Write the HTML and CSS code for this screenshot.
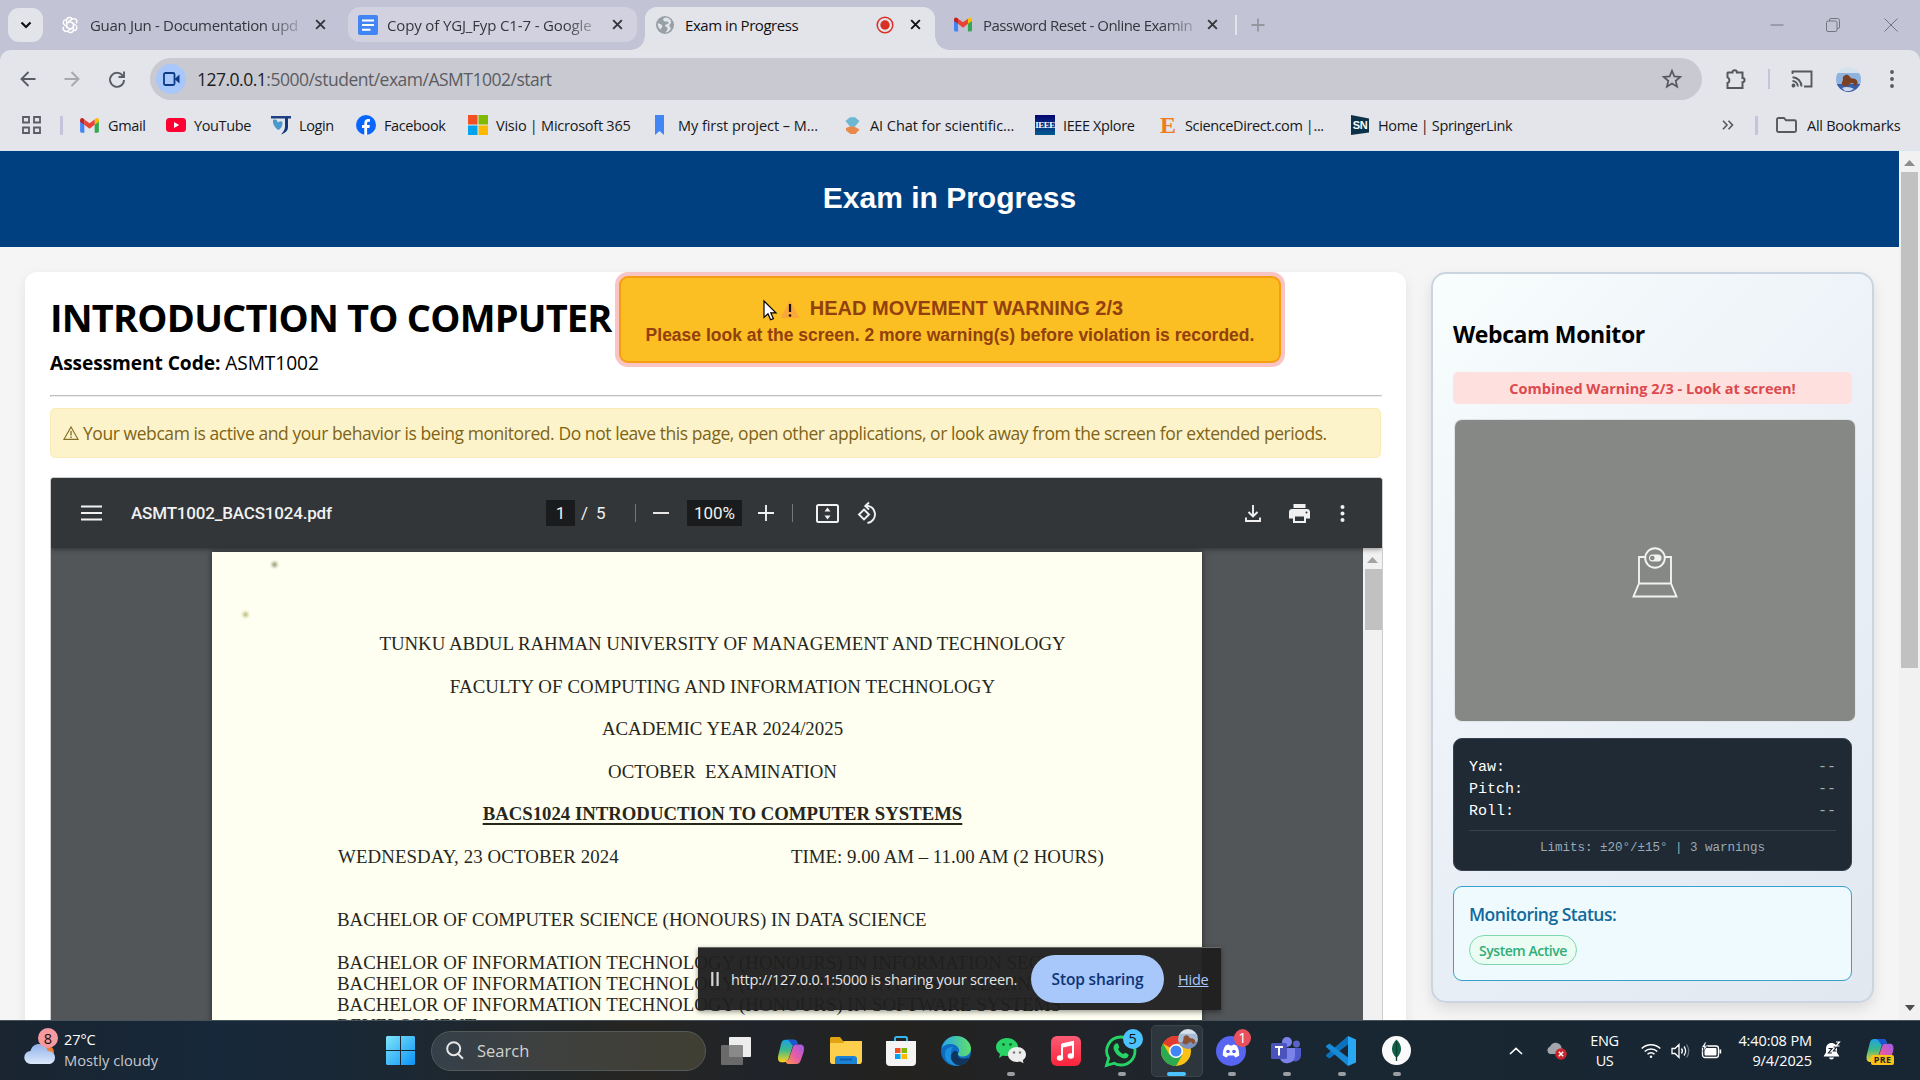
FILE: index.html
```html
<!DOCTYPE html>
<html lang="en">
<head>
<meta charset="utf-8">
<title>Exam in Progress</title>
<link rel="stylesheet" href="styles.css">
</head>
<body>
<svg class="defs" width="0" height="0">
  <defs>
    <linearGradient id="gCop1" x1="0" y1="0" x2="0" y2="1"><stop offset="0" stop-color="#1ea2e6"/><stop offset=".45" stop-color="#3cb98b"/><stop offset="1" stop-color="#ffd11a"/></linearGradient>
    <linearGradient id="gCop2" x1="1" y1="0" x2="0" y2="1"><stop offset="0" stop-color="#9a5cf0"/><stop offset=".5" stop-color="#e45aa8"/><stop offset="1" stop-color="#ff9a4a"/></linearGradient>
    <linearGradient id="gWin" x1="0" y1="0" x2="1" y2="1"><stop offset="0" stop-color="#7fe6fb"/><stop offset="1" stop-color="#0a93f5"/></linearGradient>
    <linearGradient id="gEdge" x1="0" y1="0" x2="1" y2="0"><stop offset="0" stop-color="#2aa6e8"/><stop offset="1" stop-color="#5fe06a"/></linearGradient>
    <linearGradient id="gCloud" x1="0" y1="0" x2="0" y2="1"><stop offset="0" stop-color="#8fb2ea"/><stop offset="1" stop-color="#dce9fb"/></linearGradient>
    <linearGradient id="gMusic" x1="0" y1="0" x2="0" y2="1"><stop offset="0" stop-color="#fb5c74"/><stop offset="1" stop-color="#fa233b"/></linearGradient>
    <symbol id="close" viewBox="0 0 12 12"><path d="M2 2l8 8M10 2l-8 8" stroke="currentColor" stroke-width="1.8" fill="none"/></symbol>
    <symbol id="gmail" viewBox="0 0 20 16"><path d="M0 2.5V14.5a1.2 1.2 0 0 0 1.2 1.2H4.5V6z" fill="#4285f4"/><path d="M20 2.5V14.5a1.2 1.2 0 0 1-1.2 1.2H15.5V6z" fill="#34a853"/><path d="M15.5 1.5V7.3L20 4V2.4C20 .2 17.8-.6 16.2.9z" fill="#fbbc04"/><path d="M4.500 1.500V7.300L0 4V2.400C0 .2 2.200-.6 3.800.9z" fill="#c5221f"/><path d="M4.500 1.500L10 5.600l5.500-4.100V7.300L10 11.500 4.500 7.300z" fill="#ea4335"/></symbol>
    <symbol id="copilot" viewBox="0 0 30 30"><path d="M9 3h9c2.500 0 3.500 1.500 4 4l-4.500 1-5 15c-1 3-2.500 4-5 4H4.500C1 27 .5 23 1.500 19L4.500 7C5.300 4 7 3 9 3z" fill="url(#gCop1)"/><path d="M12 3h6c2.500 0 3.500 1.500 4.200 4.500L18 9.500c-3.500 0-3-6.500-8-6.500z" fill="#1b57d0"/><path d="M21 8h4.500c3.500 0 4 4 3 8l-3 9c-1 3-2.500 4-5 4h-8c-2.500 0-3-1.500-3.500-4l3.500-1 4.500-13c.8-2.200 2-3 4-3z" fill="url(#gCop2)"/></symbol>
  </defs>
</svg>

<div class="screen">
  <header class="tabstrip">
    <div class="tab-search"><svg width="12" height="8" viewBox="0 0 12 8"><path d="M1.500 1.500L6 6l4.500-4.500" stroke="#111" stroke-width="2.200" fill="none"/></svg></div>
    <div class="tab tab-a">
      <svg width="18" height="18" viewBox="0 0 24 24" fill="none" stroke="#fff" stroke-width="1.900"><path d="M12 7.500L16.500 10v5L12 17.600 7.500 15v-5z"/><path d="M7.500 12V6a4 4 0 0 1 7.500-2M10 7.200l5-3a4 4 0 0 1 5.500 5.500M14.500 9l4.800 3a4 4 0 0 1-1.800 7.400M16.500 12v6a4 4 0 0 1-7.500 2M14 17l-5 3a4 4 0 0 1-5.500-5.500M9.500 15l-4.800-3A4 4 0 0 1 6.500 4.800"/></svg>
      <span class="title fade">Guan Jun - Documentation upd</span>
      <svg class="x" width="13" height="13"><use href="#close"/></svg>
    </div>
    <div class="tab tab-b">
      <svg width="20" height="20" viewBox="0 0 20 20"><rect width="20" height="20" rx="2" fill="#4285f4"/><path d="M4 5.500h12M4 10h12M4 14.700h8.500" stroke="#fff" stroke-width="2"/></svg>
      <span class="title fade">Copy of YGJ_Fyp C1-7 - Google</span>
      <svg class="x" width="13" height="13"><use href="#close"/></svg>
    </div>
    <div class="tab tab-c">
      <svg width="18" height="18" viewBox="0 0 18 18"><circle cx="9" cy="9" r="9" fill="#97a0a5"/><path d="M10 1.500c-3 .5-3.500 2-2 3.500s4-.5 4.500 1.500-3.500 1.500-3.500 3 3 1 2.500 3.500-1.500 2.500-2.500 3.500c2.500 0 5-1.500 6-4.500-1-1.500-2-1-1.500-3s2-1.500 1.500-3.500C14.500 3.500 13 2 10 1.500zM1.800 7c2 1 4.500 1.500 4.500 3S5 12 4.500 13.500C2.500 12 1.500 9.500 1.800 7z" fill="#e3e4ea"/></svg>
      <span class="title">Exam in Progress</span>
      <svg width="18" height="18" viewBox="0 0 18 18"><circle cx="9" cy="9" r="7.800" fill="none" stroke="#d93025" stroke-width="1.500"/><circle cx="9" cy="9" r="4.700" fill="#d93025"/></svg>
      <svg class="x dark" width="13" height="13"><use href="#close"/></svg>
    </div>
    <div class="tab tab-d">
      <svg width="18" height="15"><use href="#gmail"/></svg>
      <span class="title fade">Password Reset - Online Examin</span>
      <svg class="x" width="13" height="13"><use href="#close"/></svg>
    </div>
    <i class="tab-sep"></i>
    <svg width="14" height="14" viewBox="0 0 14 14"><path d="M7 .5v13M.5 7h13" stroke="#96969f" stroke-width="1.800"/></svg>
    <div class="win">
      <svg width="14" height="14" viewBox="0 0 14 14" fill="none" stroke="#74747e"><path d="M.5 7h13"/></svg>
      <svg width="14" height="14" viewBox="0 0 14 14" fill="none" stroke="#74747e"><rect x=".5" y="3" width="10.500" height="10.500" rx="1.500"/><path d="M3.500 3V2A1.500 1.500 0 0 1 5 .5h6.500a2 2 0 0 1 2 2V9A1.500 1.500 0 0 1 12 10.500h-1"/></svg>
      <svg width="14" height="14" viewBox="0 0 14 14" fill="none" stroke="#74747e"><path d="M.5.5l13 13M13.500.5l-13 13"/></svg>
    </div>
  </header>

  <div class="chrome">
    <nav class="toolbar">
      <svg width="16" height="16" viewBox="0 0 16 16" fill="none" stroke="#5a5d63" stroke-width="1.900"><path d="M15.500 8H1.500M8.500 1L1.500 8l7 7"/></svg>
      <svg width="16" height="16" viewBox="0 0 16 16" fill="none" stroke="#a6a8ae" stroke-width="1.900"><path d="M.5 8h14M7.500 1l7 7-7 7"/></svg>
      <svg width="16" height="16" viewBox="0 0 16 16" fill="none" stroke="#5a5d63" stroke-width="1.900"><path d="M14 5.200A7 7 0 1 0 15 9M15 .5V6H9.500"/></svg>
      <div class="omnibox">
        <span class="chip"><svg width="17" height="14" viewBox="0 0 17 14"><rect x="1" y="1" width="10.500" height="12" rx="1.500" fill="none" stroke="#0b3a86" stroke-width="1.800"/><path d="M11.500 7L16.500 2.500v9z" fill="#0b3a86"/></svg></span>
        <span class="url"><b>127.0.0.1</b>:5000/student/exam/ASMT1002/start</span>
        <svg width="20" height="20" viewBox="0 0 20 20"><path d="M10 1.800l2.300 5.600 6 .5-4.600 3.900 1.400 5.900L10 14.500l-5.100 3.200 1.400-5.900L1.700 7.900l6-.5z" fill="none" stroke="#55585d" stroke-width="1.700"/></svg>
      </div>
      <svg width="22" height="22" viewBox="0 0 22 22"><path d="M3 4.500h4.500a2.200 2.200 0 0 1 4.400 0H17.500V10a2 2 0 0 1 0 4.200V20H2.500v-5a3 3 0 0 0 0-5.600V5z" fill="none" stroke="#55585d" stroke-width="2"/></svg>
      <i class="t-sep"></i>
      <svg width="22" height="18" viewBox="0 0 22 18" fill="none" stroke="#55585d" stroke-width="1.900"><path d="M1.500 4V1.500h19v15H13M1.500 7.200a9.300 9.300 0 0 1 9 9.300M1.500 11a5.500 5.500 0 0 1 5.400 5.500"/><circle cx="2.500" cy="15.500" r="1" fill="#55585d"/></svg>
      <svg width="25" height="25" viewBox="0 0 25 25"><clipPath id="av"><circle cx="12.500" cy="12.500" r="12.500"/></clipPath><g clip-path="url(#av)"><path fill="#d5e2ee" d="M0 0h25v9H0z"/><path fill="#8fb2de" d="M0 6h25v11H0z"/><path fill="#3a5da8" d="M0 17h25v8H0z"/><path d="M6 18c-1-2 1-4 1-6-1-2 2-5 5-4 2 1 2 3 4 3.500 4 0 6 2 5.500 5.500l-3 2-1.500-3-3 .5-3 3-2-.5z" fill="#7b3f22"/><path d="M6 21c4-2 9-1 12 1l-4 2H9z" fill="#c9d8ee"/></g></svg>
      <svg width="4" height="18" viewBox="0 0 4 18" fill="#55585d"><circle cx="2" cy="2" r="1.900"/><circle cx="2" cy="9" r="1.900"/><circle cx="2" cy="16" r="1.900"/></svg>
    </nav>

    <nav class="bookmarks">
      <svg width="19" height="18" viewBox="0 0 19 18" fill="none" stroke="#5a5d63" stroke-width="1.800"><path d="M1 1h6v5.500H1zM12 1h6v5.500h-6zM1 11.500h6V17H1zM12 11.500h6V17h-6z"/></svg>
      <i class="sep"></i>
      <svg width="19" height="15"><use href="#gmail"/></svg><span>Gmail</span>
      <svg width="20" height="14" viewBox="0 0 20 14"><rect width="20" height="14" rx="3.500" fill="#f03"/><path d="M8 4l5.200 3L8 10z" fill="#fff"/></svg><span>YouTube</span>
      <svg width="20" height="20" viewBox="0 0 20 20"><path d="M0 1h20v2.500H0z" fill="#1d3f86"/><path d="M14 3h3v9c0 4-3 6-7 7.500 2.500-3 4-5 4-8z" fill="#123a7c"/><path d="M2 5c3-1.500 5 1 4.500 2.500C9 6 12 5 11.500 9c-.5 3-2 5-4 6C4 13 1.500 9 2 5z" fill="#4a98cc"/></svg><span>Login</span>
      <svg width="20" height="20" viewBox="0 0 20 20"><circle cx="10" cy="10" r="10" fill="#0866ff"/><path d="M8.300 20v-7H6v-3h2.300V8.300C8.300 5.500 9.800 4 12.300 4c.8 0 1.400.1 1.700.2v2.600h-1.300c-1.200 0-1.600.5-1.600 1.600V10h2.800l-.5 3h-2.300v7z" fill="#fff"/></svg><span>Facebook</span>
      <svg width="20" height="20" viewBox="0 0 20 20"><path fill="#f25022" d="M0 0h9.500v9.500H0z"/><path fill="#7fba00" d="M10.500 0H20v9.500h-9.500z"/><path fill="#00a4ef" d="M0 10.500h9.500V20H0z"/><path fill="#ffb900" d="M10.500 10.500H20V20h-9.500z"/></svg><span class="ls-a">Visio | Microsoft 365</span>
      <svg width="9" height="20" viewBox="0 0 9 20"><path d="M0 0h9v20l-4.500-4L0 20z" fill="#4285f4"/></svg><span class="ls-b">My first project – M...</span>
      <svg width="15" height="17" viewBox="0 0 15 17"><path d="M7.500 8.500l7 4-4 4.500h-5L1 13.500V11z" fill="#e8894a"/><path d="M5 .3h5L14.500 4 10 9.500H5L.5 4z" fill="#6fb7d0"/></svg><span class="ls-b">AI Chat for scientific...</span>
      <em class="ieee">IEEE</em><span>IEEE Xplore</span>
      <em class="elsevier">E</em><span>ScienceDirect.com |...</span>
      <em class="sn">SN</em><span>Home | SpringerLink</span>
      <svg width="12" height="10" viewBox="0 0 12 10" fill="none" stroke="#55585d" stroke-width="1.600"><path d="M1 .8L5 5 1 9.200M6.500.8l4 4.200-4 4.200"/></svg>
      <i class="sep"></i>
      <svg width="21" height="16" viewBox="0 0 21 16"><path d="M1 13.500v-11C1 1.700 1.700 1 2.500 1H8l2 2.300h8.500c.8 0 1.500.7 1.500 1.500v8.700c0 .8-.7 1.500-1.500 1.500h-16C1.700 15 1 14.300 1 13.500z" fill="none" stroke="#55585d" stroke-width="1.900"/></svg><span class="ls-a">All Bookmarks</span>
    </nav>
  </div>

  <div class="viewport">
    <main class="page">
      <div class="hero"><h1>Exam in Progress</h1></div>
      <div class="columns">
        <section class="card">
          <h2>INTRODUCTION TO COMPUTER</h2>
          <p class="code"><b>Assessment Code:</b> <span>ASMT1002</span></p>
          <hr>
          <div class="notice"><svg width="16" height="14" viewBox="0 0 16 14"><path d="M8 1L15 13.300H1z" fill="none" stroke="#857028" stroke-width="1.200"/><path d="M8 5v4.500M8 10.500v1.500" stroke="#857028" stroke-width="1.400"/></svg><span>Your webcam is active and your behavior is being monitored. Do not leave this page, open other applications, or look away from the screen for extended periods.</span></div>
          <div class="pdf">
            <div class="pdfbar">
              <svg width="21" height="16" viewBox="0 0 21 16"><path d="M0 1.500h21M0 8h21M0 14.500h21" stroke="#f1f1f1" stroke-width="2.200"/></svg>
              <span class="fname">ASMT1002_BACS1024.pdf</span>
              <span class="box">1</span>
              <span class="slash">/</span><span>5</span>
              <i></i>
              <svg width="16" height="16" viewBox="0 0 16 16"><path d="M0 8h16" stroke="#f1f1f1" stroke-width="1.900"/></svg>
              <span class="box">100%</span>
              <svg width="16" height="16" viewBox="0 0 16 16"><path d="M0 8h16M8 0v16" stroke="#f1f1f1" stroke-width="1.900"/></svg>
              <i></i>
              <svg width="23" height="19" viewBox="0 0 23 19"><rect x="1" y="1" width="21" height="17" rx="1.500" fill="none" stroke="#f1f1f1" stroke-width="2"/><path d="M11.500 3.500l3 4h-6zM11.500 15.500l3-4h-6z" fill="#f1f1f1"/></svg>
              <svg width="23" height="23" viewBox="0 0 23 23" fill="none" stroke="#f1f1f1" stroke-width="1.900"><path d="M8 7.500L13 12.500l-5 5-5-5z"/><path d="M9 3.700a8.700 8.700 0 1 1 2.500 17.300M13 .5L9.300 4 13 7.500"/></svg>
              <svg width="16" height="17" viewBox="0 0 16 17" fill="none" stroke="#f1f1f1" stroke-width="1.900"><path d="M8 0v11M3.500 7L8 11.500 12.500 7M1 12.500V16h14v-3.500"/></svg>
              <svg width="21" height="19" viewBox="0 0 21 19"><path d="M4.500 0h12v4h-12zM3 5h15c1.700 0 3 1.300 3 3v6.500h-4V19H4v-4.500H0V8c0-1.700 1.300-3 3-3zm3 7.500V17h9v-4.500z" fill="#f1f1f1" fill-rule="evenodd"/><circle cx="17.500" cy="8.500" r="1" fill="#323639"/></svg>
              <svg width="5" height="17" viewBox="0 0 5 17" fill="#f1f1f1"><circle cx="2.500" cy="2" r="2"/><circle cx="2.500" cy="8.500" r="2"/><circle cx="2.500" cy="15" r="2"/></svg>
            </div>
            <div class="pdfbody">
              <article class="sheet">
                <p>TUNKU ABDUL RAHMAN UNIVERSITY OF MANAGEMENT AND TECHNOLOGY</p>
                <p class="l2">FACULTY OF COMPUTING AND INFORMATION TECHNOLOGY</p>
                <p>ACADEMIC YEAR 2024/2025</p>
                <p>OCTOBER&nbsp; EXAMINATION</p>
                <p class="l5">BACS1024 INTRODUCTION TO COMPUTER SYSTEMS</p>
                <div class="when"><span>WEDNESDAY, 23 OCTOBER 2024</span><span>TIME: 9.00 AM – 11.00 AM (2 HOURS)</span></div>
                <p class="l7">BACHELOR OF COMPUTER SCIENCE (HONOURS) IN DATA SCIENCE</p>
                <div class="progs">BACHELOR OF INFORMATION TECHNOLOGY (HONOURS) IN INFORMATION SECURITY<br>BACHELOR OF INFORMATION TECHNOLOGY (HONOURS) IN INTERNET TECHNOLOGY<br>BACHELOR OF INFORMATION TECHNOLOGY (HONOURS) IN SOFTWARE SYSTEMS<br>DEVELOPMENT</div>
                <i class="speck s1"></i><i class="speck s2"></i>
              </article>
              <div class="pdfscroll"><svg width="11" height="6" viewBox="0 0 11 6"><path d="M0 6L5.500 0 11 6z" fill="#a3a3a3"/></svg><i></i></div>
            </div>
          </div>
        </section>

        <aside class="cam">
          <h3>Webcam Monitor</h3>
          <div class="alert">Combined Warning 2/3 - Look at screen!</div>
          <div class="video"><svg width="46" height="56" viewBox="0 0 46 56" fill="none" stroke="#f2f2f2" stroke-width="1.900"><circle cx="23" cy="15" r="9.800"/><rect x="17" y="11.500" width="12.500" height="7" rx="3.500" fill="#f2f2f2" stroke="none"/><circle cx="20.300" cy="15" r="2.300" fill="#868886" stroke="none"/><path d="M13.500 14H7v26.500h32V14h-6.500M7 40.500L1.500 53.500h43L39 40.500"/></svg></div>
          <div class="pose">
            <div><span>Yaw:</span><em>--</em></div>
            <div><span>Pitch:</span><em>--</em></div>
            <div><span>Roll:</span><em>--</em></div>
            <p>Limits: ±20°/±15° | 3 warnings</p>
          </div>
          <div class="status"><h4>Monitoring Status:</h4><span class="pill">System Active</span></div>
        </aside>
      </div>
    </main>
    <div class="scroll">
      <svg width="11" height="6" viewBox="0 0 11 6"><path d="M0 6L5.500 0 11 6z" fill="#8d8d8d"/></svg>
      <i></i>
      <svg width="10" height="6" viewBox="0 0 10 6"><path d="M0 0h10L5 6z" fill="#4d4d4d"/></svg>
    </div>

    <div class="banner">
      <div class="b1"><svg width="20" height="20" viewBox="0 0 20 20"><path d="M10 1L19.500 19H.5z" fill="#fba83a"/><path d="M10 5v8" stroke="#1c1005" stroke-width="2.200"/><circle cx="10" cy="16.500" r="1.300" fill="#1c1005"/></svg><span>HEAD MOVEMENT WARNING 2/3</span></div>
      <div class="b2">Please look at the screen. 2 more warning(s) before violation is recorded.</div>
    </div>
    <svg class="cursor" width="14" height="22" viewBox="0 0 14 22"><path d="M1 1v16.500l4-3.700 2.600 6 2.800-1.200-2.600-5.800h5.200z" fill="#fff" stroke="#000" stroke-width="1.200"/></svg>

    <div class="share">
      <svg width="8" height="14" viewBox="0 0 8 14"><path d="M1.300 0v14M6.600 0v14" stroke="#d5d5d5" stroke-width="2.200"/></svg>
      <span class="share-text">http://127.0.0.1:5000 is sharing your screen.</span>
      <span class="share-btn">Stop sharing</span>
      <span class="share-hide">Hide</span>
    </div>
  </div>

  <footer class="taskbar">
    <div class="weather">
      <svg width="36" height="40" viewBox="0 0 36 40"><circle cx="24" cy="24" r="6" fill="#ee7d33"/><path d="M7 36a6.500 6.500 0 0 1-.5-13C8 18 11 16 15 16c5 0 8 3 8.500 7C28 23 31 25.500 31 29.500S28 36 25 36z" fill="url(#gCloud)"/><circle cx="24" cy="10" r="10" fill="#f79a9f"/></svg>
      <b class="wbadge">8</b>
      <p><span>27°C</span><em>Mostly cloudy</em></p>
    </div>
    <svg width="29" height="29" viewBox="0 0 29 29" fill="url(#gWin)"><path d="M1 0h13v14H0V1zM15 0h13l1 1v13H15zM0 15h14v14H1l-1-1zM15 15h14v13l-1 1H15z"/></svg>
    <div class="search"><svg width="18" height="19" viewBox="0 0 18 19" fill="none" stroke="#e6e6e6" stroke-width="2"><circle cx="7.700" cy="7.700" r="6.500"/><path d="M12 12.800l5 5"/></svg><span>Search</span></div>
    <div class="apps">
      <div><svg width="30" height="28" viewBox="0 0 30 28"><rect x="8" y="0" width="22" height="20" rx="1" fill="#ededed"/><rect x="0" y="8" width="22" height="20" rx="1" fill="#777" fill-opacity=".85"/></svg></div>
      <div><svg width="30" height="28" viewBox="0 0 30 30"><use href="#copilot"/></svg></div>
      <div><svg width="32" height="28" viewBox="0 0 32 28"><path d="M1.500 0H10l3 4h17c1.200 0 2 .8 2 2v18H0V1.500C0 .7.700 0 1.500 0z" fill="#e2a312"/><path d="M0 6h13l2-2h17v20c0 1.500-1 3-2 3H2c-1 0-2-1-2-3z" fill="#fdcf4c"/><path d="M5 27v-5a3 3 0 0 1 3-3h16a3 3 0 0 1 3 3v5z" fill="#1b83d6"/><path d="M10 22.500h12" stroke="#0e5ba8" stroke-width="1.800"/></svg></div>
      <div><svg width="30" height="30" viewBox="0 0 30 30"><path d="M9 8V2.500C9 1.500 9.500 1 10.500 1h9c1 0 1.500.5 1.500 1.500V8" fill="none" stroke="#35b4ef" stroke-width="2"/><path d="M0 5h30v21a4 4 0 0 1-4 4H4a4 4 0 0 1-4-4z" fill="#f4f4f4"/><path fill="#f25022" d="M9 12h5.500v5H9z"/><path fill="#7fba00" d="M15.500 12H21v5h-5.500z"/><path fill="#00a4ef" d="M9 18h5.500v5H9z"/><path fill="#ffb900" d="M15.500 18H21v5h-5.500z"/></svg></div>
      <div><svg width="30" height="30" viewBox="0 0 30 30"><circle cx="15" cy="15" r="15" fill="#0f6cc4"/><path d="M.5 12.500C2 5 8 0 15 0c9 0 15 6.500 15 12.500 0 5-4 8-8 8-4.500 0-6-2-4.500-3.500C20 14 16 8 10 8 5.500 8 2 10 .5 12.500z" fill="url(#gEdge)"/><path d="M17 18c-1 3 3 6.500 11 3.500C25.500 27 20 30 15 30 9 28 8.500 20 12 16c2-2.500 5-1 5 2z" fill="#10345e"/><path d="M10 17c-1.500 6 2 12 9 12.500C10 31 3 25 4 17c.5-4 4-6.500 8-6-1.500 1.500-2 4-2 6z" fill="#1b90dc"/></svg></div>
      <div class="run"><svg width="30" height="26" viewBox="0 0 30 26"><path d="M11 0c6 0 11 4 11 9s-5 9-11 9c-1.500 0-2.500-.2-4-.6L3 20l1-4C1.500 14 0 12 0 9c0-5 5-9 11-9z" fill="#2ad366"/><circle cx="7.500" cy="6.500" r="1.400" fill="#136b32"/><circle cx="14.500" cy="6.500" r="1.400" fill="#136b32"/><path d="M21 9c5 0 9 3.300 9 7.500 0 2.300-1.200 4.300-3.200 5.700l.7 3-3.200-1.700c-1 .3-2 .5-3.300.5-5 0-9-3.300-9-7.500S16 9 21 9z" fill="#ededed"/><circle cx="18" cy="14.500" r="1.200" fill="#777"/><circle cx="24" cy="14.500" r="1.200" fill="#777"/></svg></div>
      <div><svg width="30" height="30" viewBox="0 0 30 30"><rect width="30" height="30" rx="6" fill="url(#gMusic)"/><path d="M11 8.500L22 6v13.500M11 8.500V22" fill="none" stroke="#fff" stroke-width="2"/><path d="M10 8l13-3v4L10 12z" fill="#fff"/><ellipse cx="9" cy="22" rx="3.200" ry="2.700" fill="#fff"/><ellipse cx="19.800" cy="20" rx="3.200" ry="2.700" fill="#fff"/></svg></div>
      <div class="run"><svg width="32" height="32" viewBox="0 0 32 32"><path d="M16 2a14 14 0 0 1 0 28c-2.500 0-4.800-.6-6.800-1.800L1.500 30.500l2.200-7.300A14 14 0 0 1 16 2z" fill="#1f2829" stroke="#25d366" stroke-width="2.800"/><path d="M11 8.500c1-.6 1.800-.3 2.200.8l1 2.600c.2.700-1.200 1.700-1 2.300 1 2.200 2.500 3.700 4.800 4.700.8.300 1.500-1.500 2.300-1.200l2.500 1.200c1 .5 1 1.200.5 2.300-1 2-3.500 2.800-6 1.800-4-1.500-7-4.500-8.500-8.500-.8-2.500.2-5 2.200-6z" fill="#25d366"/></svg><b class="n blue">5</b></div>
      <div class="run on"><svg width="30" height="30" viewBox="0 0 30 30"><circle cx="15" cy="15" r="15" fill="#fbc116"/><path d="M15 15L2 7.500A15 15 0 0 1 28 7.500H15z" fill="#e33b2e"/><path d="M15 15l-6.500 3.700L2 7.500A15 15 0 0 0 15 30l6.500-11.300z" fill="#2da94f"/><path d="M2 7.500A15 15 0 0 1 28 7.500H15z" fill="#e33b2e"/><circle cx="15" cy="15" r="7" fill="#fff"/><circle cx="15" cy="15" r="5.500" fill="#4285f4"/></svg><svg class="n" width="20" height="20" viewBox="0 0 25 25"><g clip-path="url(#av)"><path fill="#d5e2ee" d="M0 0h25v9H0z"/><path fill="#a9bcd6" d="M0 6h25v11H0z"/><path fill="#7d93bf" d="M0 17h25v8H0z"/><path d="M6 18c-1-2 1-4 1-6-1-2 2-5 5-4 2 1 2 3 4 3.500 4 0 6 2 5.500 5.500l-3 2-1.500-3-3 .5-3 3-2-.5z" fill="#8b5236"/></g></svg></div>
      <div class="run"><svg width="30" height="30" viewBox="0 0 30 30"><circle cx="15" cy="15" r="15" fill="#5865f2"/><path d="M9.500 9.500c1.300-.7 2.500-1 3.500-1.100l.7 1.200h2.600l.7-1.200c1 .1 2.200.4 3.500 1.100 2 3 3 6.500 2.700 10-1.300 1-2.700 1.600-4 2l-1.200-1.900h-6L10.800 21.500c-1.300-.4-2.700-1-4-2-.3-3.500.7-7 2.700-10z" fill="#fff"/><circle cx="12" cy="15.500" r="1.800" fill="#5865f2"/><circle cx="18" cy="15.500" r="1.800" fill="#5865f2"/></svg><b class="n red">1</b></div>
      <div class="run"><svg width="30" height="28" viewBox="0 0 30 28"><circle cx="25.500" cy="7" r="3.400" fill="#5b62c8"/><circle cx="16" cy="5" r="5" fill="#7b83eb"/><path d="M20 11h10v8a6 6 0 0 1-8 5z" fill="#5059c9"/><path d="M9 11h15v8a8 8 0 0 1-15 3z" fill="#7b83eb"/><rect y="6" width="16" height="16" rx="1.500" fill="#4b53bc"/><path d="M4 10h8M8 10v8.500" stroke="#fff" stroke-width="2"/></svg></div>
      <div class="run"><svg width="30" height="30" viewBox="0 0 30 30"><path d="M22 0l8 3.500v23L22 30z" fill="#2aa7f2"/><path d="M22 0v8.500L3.500 22.500.3 20.500 0 19z" fill="#0d72bd"/><path d="M22 30v-8.500L3.500 7.500.3 9.500 0 11z" fill="#1789d6"/></svg></div>
      <div class="run"><svg width="29" height="29" viewBox="0 0 29 29"><circle cx="14.500" cy="14.500" r="14.500" fill="#fafafa"/><path d="M14.500 3.500c5 5 7 12 0 18.500-7-6.500-5-13.500 0-18.500z" fill="#116149"/><path d="M14.500 5v20" stroke="#0b3f2f" stroke-width="1.300"/></svg></div>
    </div>
    <div class="tray">
      <svg width="14" height="8" viewBox="0 0 14 8"><path d="M1 7l6-5.700L13 7" fill="none" stroke="#fff" stroke-width="1.600"/></svg>
      <svg width="21" height="18" viewBox="0 0 21 18"><path d="M4 12a4 4 0 0 1 0-7.500C6 1 9 .5 11 1c3 .5 4.500 3 4.500 5 2 1 3 4-1 6z" fill="#a3a7ab"/><circle cx="15" cy="12" r="5.800" fill="#c9252d"/><path d="M12.800 9.800l4.400 4.400M17.200 9.800l-4.400 4.400" stroke="#fff" stroke-width="1.400"/></svg>
      <p class="lang">ENG<br>US</p>
      <svg width="20" height="16" viewBox="0 0 20 16" fill="none" stroke="#fff" stroke-width="1.500"><path d="M.7 5.500a13.200 13.200 0 0 1 18.600 0M3.700 8.500a9 9 0 0 1 12.600 0M6.500 11.300a5 5 0 0 1 7 0"/><circle cx="10" cy="13.800" r="1.200" fill="#fff" stroke="none"/></svg>
      <svg width="20" height="16" viewBox="0 0 20 16" fill="none" stroke="#fff" stroke-width="1.300"><path d="M1 5.500h3L8 1.500v13l-4-4H1zM10.500 5.500q1.800 2.500 0 5M13 3.500q3.300 4.500 0 9"/><path d="M15.500 1.500q4.500 6.500 0 13" stroke="#6b7680"/></svg>
      <svg width="21" height="17" viewBox="0 0 21 17"><rect x="1.500" y="4" width="16" height="11.500" rx="2.500" fill="none" stroke="#fff" stroke-width="1.300"/><rect x="3.500" y="6" width="12" height="7.500" rx="1" fill="#fff"/><path d="M18.500 7.500h1.700v4h-1.700z" fill="#fff"/><path d="M4 0L.5 5.500H3L2 9.500 6.500 4H4l1.500-4z" fill="#fff" stroke="#182634" stroke-width=".7"/></svg>
      <p class="clock">4:40:08 PM<br>9/4/2025</p>
      <svg width="18" height="19" viewBox="0 0 18 19"><path d="M8.500 2C5 2 3 4.500 3 8v3.500L.8 15v.5h15.400V15L14 11.500V8c0-3.500-2-6-5.500-6zM6 16.500h5c-.5 2.500-4.500 2.500-5 0z" fill="#fff"/><path d="M5.500 7.500h3.500l-3.500 4.500h3.500M10.500 6h3l-3 4h3" fill="none" stroke="#182634" stroke-width="1.200"/><path d="M13 1h3.500l-3.500 4h3.500" fill="none" stroke="#fff" stroke-width="1.200"/></svg>
      <span class="pre"><svg width="30" height="29" viewBox="0 0 30 30"><use href="#copilot"/></svg><b>PRE</b></span>
    </div>
  </footer>
</div>
</body>
</html>
```
FILE: styles.css
```css
* { box-sizing: border-box; }
body { margin: 0; font-family: "Open Sans", "Noto Sans", sans-serif; }
p, h1, h2, h3, h4 { margin: 0; }
em, i { font-style: normal; }
svg { display: block; flex: none; overflow: visible; }
.defs { position: absolute; }

.screen { width: 1920px; height: 1080px; overflow: hidden; display: flex; flex-direction: column; white-space: nowrap; background: #c3c3d6; }

/* Tab strip */
.tabstrip { height: 50px; flex: none; display: flex; align-items: center; padding-left: 8px; position: relative; font-size: 15px; color: #35363c; letter-spacing: -0.45px; }
.tab-search { width: 35px; height: 34px; border-radius: 11px; background: #e3e4ea; display: flex; align-items: center; justify-content: center; }
.tab { height: 35px; border-radius: 12px; display: grid; align-items: center; align-self: flex-start; margin-top: 7px; }
.tab-a { margin-left: 18px; width: 287px; grid-template-columns: 29px 208px 1fr; letter-spacing: -0.32px; }
.tab-a .x { margin-left: 16px; }
.tab-b { width: 289px; background: #d1d1df; padding-left: 10px; grid-template-columns: 29px 209px 1fr; letter-spacing: -0.14px; }
.tab-b .x { margin-left: 15px; }
.tab-c { width: 290px; height: 43px; margin-left: 8px; padding: 0 0 8px 11px; background: #e3e4ea; border-radius: 12px 12px 0 0; grid-template-columns: 29px 191px 33px 1fr; color: #111; position: relative; }
.tab-c::before, .tab-c::after { content: ""; position: absolute; bottom: 0; width: 14px; height: 14px; }
.tab-c::before { left: -14px; background: radial-gradient(circle at 0 0, transparent 13.500px, #e3e4ea 14px); }
.tab-c::after { right: -14px; background: radial-gradient(circle at 100% 0, transparent 13.500px, #e3e4ea 14px); }
.tab-d { margin-left: 19px; width: 281px; grid-template-columns: 29px 211px 1fr; letter-spacing: -0.5px; }
.tab-d .x { margin-left: 12px; }
.x { color: #35363c; }
.x.dark { color: #111; }
.title { overflow: hidden; line-height: 24px; }
.fade { -webkit-mask-image: linear-gradient(90deg, #000 85%, rgba(0,0,0,.25)); mask-image: linear-gradient(90deg, #000 85%, rgba(0,0,0,.25)); }
.tab-sep { width: 2px; height: 20px; background: #e3e4ea; margin-right: 14px; }
.win { margin-left: auto; width: 150px; display: grid; grid-template-columns: 56px 58px 1fr; }

/* Toolbar */
.chrome { height: 101px; flex: none; background: #e3e5ea; border-radius: 11px 11px 0 0; border-bottom: 1px solid #d7e6f2; }
.toolbar { height: 58px; display: grid; align-items: center; padding-left: 20px; grid-template-columns: 44px 45px 41px 1575px 33px 33px 45px 54px 1fr; }
.omnibox { width: 1552px; height: 42px; border-radius: 21px; background: #c9c9d1; display: grid; align-items: center; grid-template-columns: 47px 1465px 1fr; font-size: 17.500px; color: #5b5c62; }
.chip { width: 30px; height: 30px; margin-left: 6px; border-radius: 50%; background: #a8c7fa; display: flex; align-items: center; justify-content: center; }
.url { letter-spacing: -0.5px; }
.url b { font-weight: 400; color: #1c1d20; }
.t-sep { width: 2px; height: 20px; background: #c3c3dc; margin-left: 10px; }
.bookmarks { height: 34px; display: grid; align-items: center; padding-left: 22px; font-size: 14.500px; color: #17181b; letter-spacing: -0.38px;
  grid-template-columns: 38px 20px 28px 58px 28px 77px 28px 57px 28px 84px 28px 159px 23px 167px 25px 165px 28px 97px 25px 166px 27px 344px 33px 21px 31px 1fr; }
.ls-a { letter-spacing: -0.25px; }
.ls-b { letter-spacing: -0.05px; }
.sep { width: 3px; height: 19px; background: #c3c3dc; border-radius: 1px; }
.ieee { width: 20px; height: 20px; background: linear-gradient(#050570, #035a90); color: #fff; font: bold 9px/20px "Liberation Serif", serif; text-align: center; letter-spacing: -0.5px; }
.elsevier { color: #f07c20; font: bold 24px/20px "Liberation Serif", serif; }
.sn { width: 18px; height: 20px; background: #0c3249; clip-path: polygon(0 0, 100% 18%, 100% 88%, 0 100%); color: #fff; font: bold 11px/20px "Liberation Sans", sans-serif; text-align: center; letter-spacing: -0.5px; }

/* Viewport */
.viewport { flex: none; height: 869px; display: flex; position: relative; overflow: hidden; background: #f5f5f5; }
.page { width: 1899px; }
.hero { height: 96px; background: #004080; display: flex; align-items: center; justify-content: center; }
.hero h1 { color: #fff; font: bold 30px/1 "Liberation Sans", sans-serif; margin-top: -2px; }
.columns { display: flex; align-items: flex-start; gap: 25px; padding: 25px; }
.card { width: 1381px; height: 800px; background: #fff; border-radius: 12px; padding: 17px 24px 0 25px; box-shadow: 0 4px 12px rgba(0,0,0,.08); }
.card h2 { font-size: 38px; line-height: 56px; font-weight: 700; letter-spacing: -0.8px; color: #000; }
.code { font-size: 19.200px; line-height: 28px; margin-top: 4px; color: #000; letter-spacing: -0.1px; }
.card hr { margin: 18px 0 11px; height: 2px; border: 1px solid; border-color: #bdbdbd #eee #eee #bdbdbd; }
.notice { width: 1331px; height: 50px; background: #fdf3cb; border: 1px solid #faebb8; border-radius: 5px; display: grid; grid-template-columns: 20px 1fr; align-items: center; padding-left: 12px; font-size: 17.500px; color: #7f6415; letter-spacing: -0.43px; }
.pdf { margin-top: 19px; width: 1333px; height: 560px; border: 1px solid #ccc; border-radius: 4px 4px 0 0; overflow: hidden; background: #525659; }
.pdfbar { height: 70px; background: #323639; display: grid; align-items: center; padding-left: 30px; font: 17px Roboto, sans-serif; color: #f1f1f1; position: relative; box-shadow: 0 1px 5px rgba(0,0,0,.45);
  grid-template-columns: 50px 415px 34px 16px 39px 18px 34px 71px 34px 24px 40px 389px 44px 51px 1fr; }
.pdfbar .fname { font-weight: 500; letter-spacing: -0.18px; }
.pdfbar .slash { padding-left: 1px; }
.pdfbar .box { background: #191b1c; height: 26px; line-height: 26px; text-align: center; width: 29px; }
.pdfbar svg + .box { width: 55px; }
.pdfbar i { width: 1px; height: 18px; background: #74777a; }
.pdfbody { display: flex; justify-content: space-between; height: 490px; padding-left: 161px; }
.sheet { width: 990px; height: 486px; margin-top: 4px; background: #fefff0; box-shadow: 0 0 6px rgba(0,0,0,.5); padding: 71px 0 0 31px; font: 18.850px/42.600px "Liberation Serif", serif; color: #26261c; text-align: center; position: relative; }
.l2 { letter-spacing: 0.1px; }
.l5 { font-weight: 700; font-size: 18.750px; text-decoration: underline; text-decoration-thickness: 2px; text-underline-offset: 2.500px; }
.when { display: grid; grid-template-columns: 453px 1fr; margin-left: 95px; text-align: left; }
.when span:first-child { letter-spacing: 0.1px; }
.l7 { margin: 20.400px 0 10px 94px; text-align: left; }
.progs { line-height: 21.200px; margin-left: 94px; text-align: left; }
.speck { position: absolute; width: 5px; height: 5px; border-radius: 50%; background: #8d8f6a; filter: blur(1.500px); }
.s1 { left: 60px; top: 10px; }
.s2 { left: 31px; top: 60px; background: #b4b66e; }
.pdfscroll { width: 19px; background: #f1f1f1; display: flex; flex-direction: column; align-items: center; padding-top: 9px; }
.pdfscroll i { width: 17px; height: 61px; background: #c1c1c1; margin: 6px 0 0 2px; }

/* Webcam panel */
.cam { width: 443px; height: 731px; border: 2px solid #cbd5e1; border-radius: 15px; background: linear-gradient(135deg, #f8fdfd 0%, #e9eff6 55%, #e1e8ef 100%); box-shadow: 0 6px 14px rgba(0,0,0,.1); padding: 44px 20px 0; }
.cam h3 { font-size: 23px; line-height: 32px; letter-spacing: -0.4px; color: #000; }
.alert { margin-top: 22px; width: 399px; height: 32px; line-height: 33px; border-radius: 5px; background: #fee0df; color: #dc4a4d; font-size: 14.500px; font-weight: 700; text-align: center; }
.video { margin: 16px 0 0 2px; width: 400px; height: 301px; border-radius: 7px; background: #868886; box-shadow: 0 0 0 1px #dfe5e7; display: flex; align-items: center; justify-content: center; }
.pose { margin-top: 17px; width: 399px; height: 133px; border-radius: 9px; background: #1f2a35; border: 1px solid #374151; padding: 18px 15px 0; font: 15px/22px "Liberation Mono", monospace; color: #fff; }
.pose div { display: flex; justify-content: space-between; }
.pose em { color: #a3adb2; }
.pose p { margin-top: 7px; border-top: 1px solid #374450; padding-top: 6px; text-align: center; font-size: 12.500px; color: #9ca9b4; }
.status { margin-top: 15px; width: 399px; height: 95px; border: 1px solid #37a0cc; border-radius: 9px; background: #eefafd; padding: 14px 15px; }
.status h4 { font-size: 17.500px; line-height: 26px; font-weight: 600; color: #11699b; letter-spacing: -0.5px; }
.pill { display: block; width: 108px; height: 30px; margin-top: 8px; border: 1px solid #7fd9ae; border-radius: 15px; background: #ebfcf2; color: #30ad7a; font-size: 14px; line-height: 29px; font-weight: 600; text-align: center; letter-spacing: -0.45px; }

.scroll { width: 21px; background: #f1f1f1; display: flex; flex-direction: column; align-items: center; padding: 9px 0; }
.scroll i { width: 17px; height: 496px; margin: 6px 0 auto; background: #c1c1c1; }

/* Overlays */
.banner { position: absolute; left: 619px; top: 125px; width: 662px; height: 87px; border: 2px solid #f59e14; border-radius: 9px; background: #fbbf24; box-shadow: 0 0 0 4px #f9c5c4; color: #92400e; font-family: "Liberation Sans", sans-serif; font-weight: 700; text-align: center; padding-top: 17px; }
.b1 { display: flex; justify-content: center; align-items: center; gap: 10px; padding-left: 3px; font-size: 20px; line-height: 27px; }
.b2 { font-size: 17.500px; line-height: 26px; }
.cursor { position: absolute; left: 763px; top: 149px; }
.share { position: absolute; left: 698px; top: 796px; width: 523px; height: 63px; background: rgba(31,31,31,.96); border-top: 1px solid #6b6b66; display: grid; align-items: center; grid-template-columns: 20px 300px 147px 1fr; padding-left: 13px; color: #e6e6e6; font-size: 14.500px; letter-spacing: -0.22px; box-shadow: 0 2px 5px rgba(0,0,0,.4); }
.share-btn { width: 133px; height: 48px; border-radius: 24px; background: #a8c7fa; color: #0b3578; font-size: 15.500px; letter-spacing: -0.15px; font-weight: 600; text-align: center; line-height: 48px; }
.share-hide { color: #a8c7fa; text-decoration: underline; }

/* Taskbar */
.taskbar { height: 60px; flex: none; position: relative; border-top: 1px solid #46525c; background: linear-gradient(90deg, #1a2530 0, #17283a 220px, #1b2833 400px, #262521 640px, #20242a 760px, #23221f 900px, #21242a 1100px, #192732 1300px, #182634 100%); display: grid; grid-template-columns: 386px 45px 277px 727px 1fr; align-items: center; color: #fff; font-size: 14.500px; letter-spacing: -0.4px; }
.weather { position: relative; display: grid; grid-template-columns: 40px 1fr; padding-left: 24px; line-height: 20px; align-items: center; letter-spacing: 0; }
.weather svg { margin-top: -5px; }
.weather p { margin-top: -2px; }
.weather span, .weather em { display: block; }
.weather span { letter-spacing: -0.1px; }
.weather em { color: #c4c9ce; font-size: 14.700px; }
.wbadge { position: absolute; left: 38px; top: -3px; width: 20px; text-align: center; color: #111; font-weight: 400; }
.search { width: 275px; height: 40px; border-radius: 20px; background: linear-gradient(90deg, #34404a, #3f4140 40%, #403f33); border: 1px solid #54595a; display: grid; grid-template-columns: 31px 1fr; align-items: center; padding-left: 14px; font-size: 16.500px; letter-spacing: 0; color: #d2d2d0; }
.apps { display: grid; grid-template-columns: repeat(13, 55.080px); height: 59px; }
.apps > div { position: relative; display: flex; align-items: center; justify-content: center; }
.apps svg { position: relative; }
.run::after { content: ""; position: absolute; bottom: 4px; left: 24px; width: 8px; height: 4px; border-radius: 2px; background: #9a9ea2; }
.on::before { content: ""; position: absolute; left: 2px; top: 4px; width: 50px; height: 50px; border-radius: 5px; background: #2d353d; border: 1px solid #3c444b; }
.on::after { left: 18px; width: 19px; background: #4cc2ff; }
.apps .n { position: absolute; left: 29px; top: 8px; width: 20px; height: 20px; border-radius: 50%; text-align: center; line-height: 20px; font-weight: 400; }
.apps .blue { background: #4cc2ff; color: #111; }
.apps .red { background: #e8505b; left: 30px; width: 17px; height: 18px; line-height: 18px; }
.tray { display: grid; height: 59px; align-items: center; padding-left: 74px; line-height: 20px; grid-template-columns: 37px 42px 53px 30px 30px 35px 82px 47px 1fr; }
.lang { text-align: center; width: 33px; }
.clock { text-align: right; width: 75px; letter-spacing: -0.1px; }
.clock + svg { margin-left: 5px; }
.tray .clock { margin-left: 1px; }
.pre { position: relative; }
.pre b { position: absolute; left: 6px; top: 19px; width: 23px; height: 10px; border-radius: 2px; background: #fbc318; color: #222; font: bold 9px/10px "Open Sans", sans-serif; letter-spacing: 0.3px; text-align: center; }
```
